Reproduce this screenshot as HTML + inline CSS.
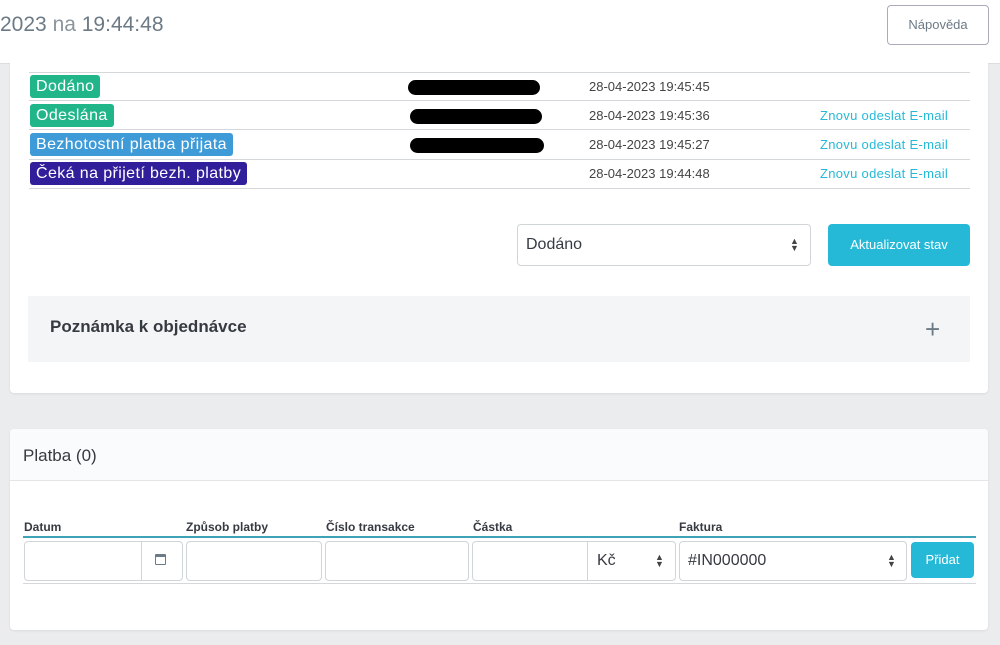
<!DOCTYPE html><html><head><meta charset="utf-8"><style>
body{margin:0;width:1000px;height:645px;background:#ebecee;font-family:"Liberation Sans",sans-serif;position:relative;overflow:hidden}
.a{position:absolute}
.hdr{left:0;top:0;width:1000px;height:63px;background:#fff;border-bottom:1px solid #ddd}
.card{background:#fff;border-radius:4px;box-shadow:0 1px 2px rgba(0,0,0,.08)}
.line{height:1px;background:#d5d8da;left:29px;width:941px}
.badge{color:#fff;font-size:16px;letter-spacing:0.4px;padding:1px 6px;border-radius:3px;line-height:21px}
.dt{font-size:13px;color:#444;left:589px}
.lk{font-size:13px;color:#25b9d7;left:820px;letter-spacing:0.3px}
.blob{background:#000;height:15px;border-radius:8px;left:408px;width:132px}
.inp{border:1px solid #d0d5d8;border-radius:4px;background:#fff;height:38px;top:541px}
.lbl{font-size:12px;font-weight:bold;color:#363a41;top:520px}
.arr{font-size:9px;line-height:7px;color:#444;text-align:center}
</style></head><body>
<div class="a hdr"></div>
<div class="a" style="left:0;top:13px;font-size:21px;color:#6c7a86">2023 <span style="color:#8a959e">na</span> 19:44:48</div>
<div class="a" style="left:887px;top:5px;width:100px;height:38px;border:1px solid #aab;border-radius:4px;font-size:13px;color:#6c7a86;text-align:center;line-height:38px">Nápověda</div>

<div class="a card" style="left:10px;top:63px;width:978px;height:330px;border-radius:0 0 4px 4px"></div>
<div class="a line" style="top:72px"></div>
<div class="a line" style="top:100px"></div>
<div class="a line" style="top:129px"></div>
<div class="a line" style="top:159px"></div>
<div class="a line" style="top:188px"></div>
<div class="a badge" style="left:30px;top:75px;background:#21b68a">Dodáno</div>
<div class="a badge" style="left:30px;top:104px;background:#21b68a">Odeslána</div>
<div class="a badge" style="left:30px;top:133px;background:#3e9bd8">Bezhotostní platba přijata</div>
<div class="a badge" style="left:30px;top:162px;background:#301e9a">Čeká na přijetí bezh. platby</div>
<div class="a blob" style="top:80px"></div>
<div class="a blob" style="top:109px;left:410px"></div>
<div class="a blob" style="top:138px;left:410px;width:134px"></div>
<div class="a dt" style="top:79px">28-04-2023 19:45:45</div>
<div class="a dt" style="top:108px">28-04-2023 19:45:36</div>
<div class="a dt" style="top:137px">28-04-2023 19:45:27</div>
<div class="a dt" style="top:166px">28-04-2023 19:44:48</div>
<div class="a lk" style="top:108px">Znovu odeslat E-mail</div>
<div class="a lk" style="top:137px">Znovu odeslat E-mail</div>
<div class="a lk" style="top:166px">Znovu odeslat E-mail</div>

<div class="a" style="left:517px;top:224px;width:292px;height:40px;border:1px solid #d0d5d8;border-radius:4px"></div>
<div class="a" style="left:526px;top:236px;font-size:16px;color:#363a41">Dodáno</div>
<div class="a arr" style="left:790px;top:238px">▲<br>▼</div>
<div class="a" style="left:828px;top:224px;width:142px;height:42px;background:#25b9d7;border-radius:4px;color:#fff;font-size:13px;text-align:center;line-height:42px">Aktualizovat stav</div>

<div class="a" style="left:28px;top:296px;width:942px;height:66px;background:#f4f5f6"></div>
<div class="a" style="left:50px;top:317px;font-size:17px;font-weight:bold;color:#363a41">Poznámka k objednávce</div>
<div class="a" style="left:925px;top:315px;font-size:26px;color:#6c7a86;line-height:28px">+</div>

<div class="a card" style="left:10px;top:429px;width:978px;height:201px"></div>
<div class="a" style="left:10px;top:429px;width:978px;height:51px;background:#fafbfc;border-bottom:1px solid #e3e5e7;border-radius:4px 4px 0 0"></div>
<div class="a" style="left:23px;top:446px;font-size:17px;color:#363a41">Platba (0)</div>

<div class="a lbl" style="left:24px">Datum</div>
<div class="a lbl" style="left:186px">Způsob platby</div>
<div class="a lbl" style="left:326px">Číslo transakce</div>
<div class="a lbl" style="left:473px">Částka</div>
<div class="a lbl" style="left:679px">Faktura</div>
<div class="a" style="left:23px;top:536px;width:953px;height:2px;background:#3fa3b8"></div>
<div class="a inp" style="left:24px;width:157px"></div>
<div class="a" style="left:141px;top:542px;width:1px;height:38px;background:#d0d5d8"></div>
<div class="a" style="left:155px;top:554px;width:11px;height:11px;border:1px solid #6c7a86;border-top-width:3px;box-sizing:border-box;border-radius:1px"></div>
<div class="a inp" style="left:186px;width:134px"></div>
<div class="a inp" style="left:325px;width:142px"></div>
<div class="a inp" style="left:472px;width:202px"></div>
<div class="a" style="left:587px;top:542px;width:1px;height:38px;background:#d0d5d8"></div>
<div class="a" style="left:597px;top:552px;font-size:16px;color:#363a41">Kč</div>
<div class="a arr" style="left:655px;top:554px">▲<br>▼</div>
<div class="a inp" style="left:679px;width:226px"></div>
<div class="a" style="left:688px;top:552px;font-size:16px;color:#363a41">#IN000000</div>
<div class="a arr" style="left:887px;top:554px">▲<br>▼</div>
<div class="a" style="left:911px;top:542px;width:63px;height:36px;background:#25b9d7;border-radius:4px;color:#fff;font-size:13px;text-align:center;line-height:36px">Přidat</div>
<div class="a" style="left:23px;top:583px;width:953px;height:1px;background:#d5d8da"></div>
</body></html>
